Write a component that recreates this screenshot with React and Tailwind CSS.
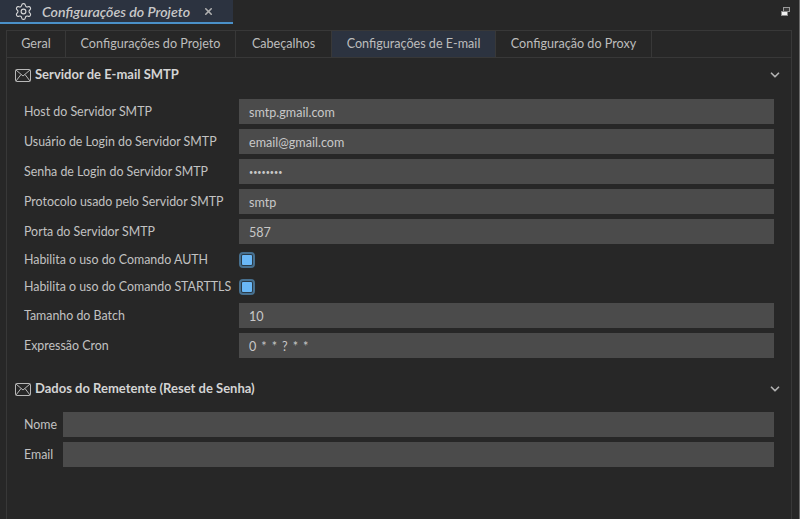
import React from 'react'
import { Settings, X, ChevronDown } from 'lucide-react'

const font = "font-['Lato','Open_Sans',sans-serif]"

const tabs = ['Geral', 'Configurações do Projeto', 'Cabeçalhos', 'Configurações de E-mail', 'Configuração do Proxy']

function MailIcon() {
  return (
    <svg width="16" height="13" viewBox="0 0 16 13" fill="none" stroke="#b8b8b8" strokeWidth="1" className="shrink-0">
      <rect x="0.5" y="0.5" width="15" height="12" rx="1" />
      <path d="M1 1l7 6 7-6M1 12l5-6.5M15 12l-5-6.5" />
    </svg>
  )
}

function RestoreIcon() {
  return (
    <svg width="9" height="9" viewBox="0 0 9 9" fill="none">
      <rect x="2.5" y="0.5" width="6" height="4" fill="#3a3a3a" stroke="#9a9a9a" />
      <rect x="0.5" y="4.5" width="6" height="4" fill="#f0f0f0" stroke="#8a8a8a" />
    </svg>
  )
}

function SectionHeader({ title }) {
  return (
    <div className="flex items-center h-[20px] pl-[8px] pr-[9px]">
      <MailIcon />
      <span className="ml-[4px] text-[13px] font-bold text-[#d4d4d4] flex-1">{title}</span>
      <ChevronDown size={14} strokeWidth={3} className="text-[#b0b0b0]" />
    </div>
  )
}

function Field({ label, value, labelWidth = 'w-[215px]', valueClass = 'text-[12.6px]' }) {
  return (
    <div className="flex items-start h-[25px] mb-[5px]">
      <div className={`${labelWidth} shrink-0 whitespace-nowrap text-[12.4px] leading-[26px] text-[#c2c2c2]`}>{label}</div>
      <div className={`flex-1 h-[25px] bg-[#4b4b4b] px-[10px] leading-[27px] text-[#c8c8c8] ${valueClass}`}>{value}</div>
    </div>
  )
}

function CheckField({ label }) {
  return (
    <div className="flex items-center h-[22px] mb-[5px]">
      <div className="w-[215px] shrink-0 whitespace-nowrap text-[12.4px] text-[#c2c2c2]">{label}</div>
      <div className="w-[16px] h-[16px] rounded-[4px] border-2 border-[#47708f] bg-[#2a3a46] p-[1px]">
        <div className="w-full h-full rounded-[1px] bg-[#6ab8f7]" />
      </div>
    </div>
  )
}

export default function App() {
  return (
    <div className={`${font} w-[800px] h-[519px] bg-[#272727] overflow-hidden flex flex-col border-r border-r-[#6a6a6a]`}>
      <div className="flex items-start h-[24px] shrink-0">
        <div className="w-[233px] h-[24px] bg-[#2c3340] border-b-2 border-b-[#4a90c8] flex items-center pl-[14px] pt-[1px]">
          <Settings size={19} strokeWidth={1.4} className="text-[#d8d8d8] shrink-0" />
          <span className="ml-[9px] text-[14.2px] italic font-semibold text-[#c8c8c8] w-[161px] whitespace-nowrap">Configurações do Projeto</span>
          <X size={11} strokeWidth={3.5} className="text-[#b0b0b0]" />
        </div>
        <div className="flex-1 flex justify-end pt-[7px] pr-[9px]">
          <RestoreIcon />
        </div>
      </div>

      <div className="ml-[6px] mr-[7px] mt-[6px] flex-1 border-l border-r border-t border-[#383838] flex flex-col">
        <div className="flex h-[27px] border-b border-[#383838] shrink-0">
          {tabs.map((t, i) => (
            <div
              key={t}
              className={`h-[26px] pt-[1px] flex items-center justify-center text-[12.6px] border-r border-[#383838] text-[#bdbdbd] ${
                i === 3 ? 'bg-[#2c3340]' : ''
              } ${['w-[59px]', 'w-[170px]', 'w-[96px]', 'w-[164px]', 'w-[156px]'][i]}`}
            >
              {t}
            </div>
          ))}
        </div>

        <div className="pt-[7px]">
          <SectionHeader title="Servidor de E-mail SMTP" />
          <div className="pl-[17px] pr-[17px] pt-[14px]">
            <Field label="Host do Servidor SMTP" value="smtp.gmail.com" />
            <Field label="Usuário de Login do Servidor SMTP" value="email@gmail.com" />
            <Field label="Senha de Login do Servidor SMTP" value="••••••••" valueClass="text-[7.2px]" />
            <Field label="Protocolo usado pelo Servidor SMTP" value="smtp" />
            <Field label="Porta do Servidor SMTP" value="587" />
            <CheckField label="Habilita o uso do Comando AUTH" />
            <CheckField label="Habilita o uso do Comando STARTTLS" />
            <Field label="Tamanho do Batch" value="10" />
            <Field label="Expressão Cron" value="0 * * ? * *" valueClass="text-[12.6px] tracking-[0.9px]" />
          </div>
          <div className="mt-[21px]">
            <SectionHeader title="Dados do Remetente (Reset de Senha)" />
          </div>
          <div className="pl-[17px] pr-[17px] pt-[13px]">
            <Field label="Nome" value="" labelWidth="w-[39px]" />
            <Field label="Email" value="" labelWidth="w-[39px]" />
          </div>
        </div>
      </div>
    </div>
  )
}
